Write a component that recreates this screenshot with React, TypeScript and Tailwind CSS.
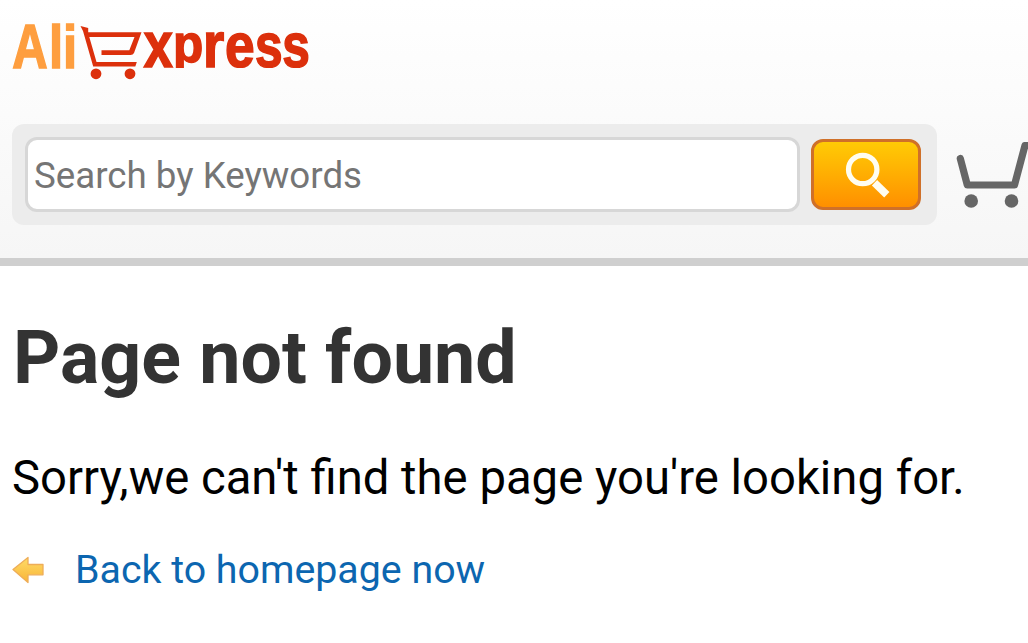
const letters = [
  { char: 'x', x: 143.8, y: 66.9, sx: 0.84, sy: 1.04 },
  { char: 'p', x: 173, y: 61.8, sx: 0.8, sy: 0.88 },
  { char: 'r', x: 203, y: 66.9, sx: 0.88, sy: 1.05 },
  { char: 'e', x: 225, y: 66.9, sx: 0.86, sy: 1.03 },
  { char: 's', x: 255, y: 66.9, sx: 0.8, sy: 1.03 },
  { char: 's', x: 282.3, y: 66.9, sx: 0.8, sy: 1.03 },
];

function Logo() {
  return (
    <svg className="block h-[90px] w-[320px]" viewBox="0 0 320 90" role="img" aria-label="AliExpress">
      <defs>
        <clipPath id="baseline">
          <rect x="140" y="20" width="180" height="48" />
        </clipPath>
      </defs>
      <g fontFamily="Liberation Sans, sans-serif" fontWeight="700" fontSize="62" strokeWidth="1.6">
        <g fill="#fe9e3f" stroke="#fe9e3f">
          <text transform="translate(12.3 68.4) scale(0.79 1.02)">A</text>
          <text transform="translate(49 68.4) scale(0.82 0.98)">l</text>
          <text transform="translate(63 68.4) scale(0.82 0.98)">i</text>
        </g>
        <g fill="#dc300c" stroke="#dc300c" clipPath="url(#baseline)">
          {letters.map((l, i) => (
            <text key={i} transform={`translate(${l.x} ${l.y}) scale(${l.sx} ${l.sy})`}>{l.char}</text>
          ))}
        </g>
      </g>
      <g fill="#dc300c">
        <path d="M80.5 26L88.2 28V32.2H141.5L134 53Q133 55 130.5 55H101.5V50.3H129.3L134.5 37H89.3L96.5 62H136.8L135.3 66.6H93.2L83 31Z" />
        <circle cx="96" cy="73.8" r="5.4" />
        <circle cx="130" cy="73.8" r="5.4" />
      </g>
    </svg>
  );
}

function SearchIcon() {
  return (
    <svg className="h-[71px] w-[110px] shrink-0" viewBox="0 0 110 71" fill="none" stroke="#fffdf0">
      <circle cx="51.7" cy="30.5" r="14.2" strokeWidth="5.2" />
      <path d="M63.5 43.8L75.8 55.8" strokeWidth="7.5" />
    </svg>
  );
}

function CartIcon() {
  return (
    <svg className="h-[70px] w-[72px] shrink-0" viewBox="956 142 72 70" fill="none" stroke="#666">
      <path d="M960.3 158.5L967.3 185H1014.5L1025 145.5H1030" strokeWidth="7.2" strokeLinecap="round" strokeLinejoin="round" />
      <circle cx="971.2" cy="201" r="6.8" fill="#666" stroke="none" />
      <circle cx="1011.5" cy="201" r="6.8" fill="#666" stroke="none" />
    </svg>
  );
}

function ArrowIcon() {
  return (
    <svg className="h-[28px] w-[33px] shrink-0" viewBox="0 0 33 28">
      <defs>
        <linearGradient id="arrow" x1="0" y1="0" x2="0" y2="1">
          <stop offset="0" stopColor="#ffdc68" />
          <stop offset="1" stopColor="#f8b437" />
        </linearGradient>
      </defs>
      <path d="M1 13.5L16 1.5V8.5H31V18.8H16V26.5Z" fill="url(#arrow)" stroke="#eead58" strokeWidth="1.3" strokeLinejoin="round" />
    </svg>
  );
}

export default function App() {
  return (
    <div className="h-[643px] w-[1028px] overflow-hidden bg-white font-['Roboto',sans-serif]">
      <header className="h-[266px] border-b-8 border-[#cfcfcf] bg-linear-to-b from-white to-[#f6f6f6]">
        <a href="#" className="block h-[124px]">
          <Logo />
        </a>
        <div className="flex pl-3">
          <form className="flex h-[101px] w-[925px] shrink-0 items-start rounded-xl bg-[#ececec] pt-[13px] pl-[13px]">
            <input
              type="text"
              placeholder="Search by Keywords"
              className="h-[75px] w-[775px] rounded-xl border-3 border-[#d7d7d7] bg-white px-[6px] pt-0.5 text-[36.7px] outline-none placeholder:text-[#757575]"
            />
            <button
              type="button"
              aria-label="Search"
              className="mt-0.5 ml-[11px] flex h-[71px] w-[110px] items-center justify-center rounded-xl border-3 border-[#cf7029] bg-linear-to-b from-[#ffcb05] to-[#ff8f00]"
            >
              <SearchIcon />
            </button>
          </form>
          <a href="#" className="mt-[18px] ml-[19px] shrink-0" aria-label="Cart">
            <CartIcon />
          </a>
        </div>
      </header>

      <main className="px-3 pt-[48px] whitespace-nowrap">
        <h1 className="pl-px text-[73.5px] leading-[88px] font-bold text-[#333]">Page not found</h1>
        <p className="mt-[46px] text-[47.25px] leading-[60px] text-black">Sorry,we can't find the page you're looking for.</p>
        <a href="#" className="mt-[36px] flex items-center gap-[30px] text-[39.35px] leading-[52px] text-[#0c66b0]">
          <ArrowIcon />
          <span>Back to homepage now</span>
        </a>
      </main>
    </div>
  );
}
